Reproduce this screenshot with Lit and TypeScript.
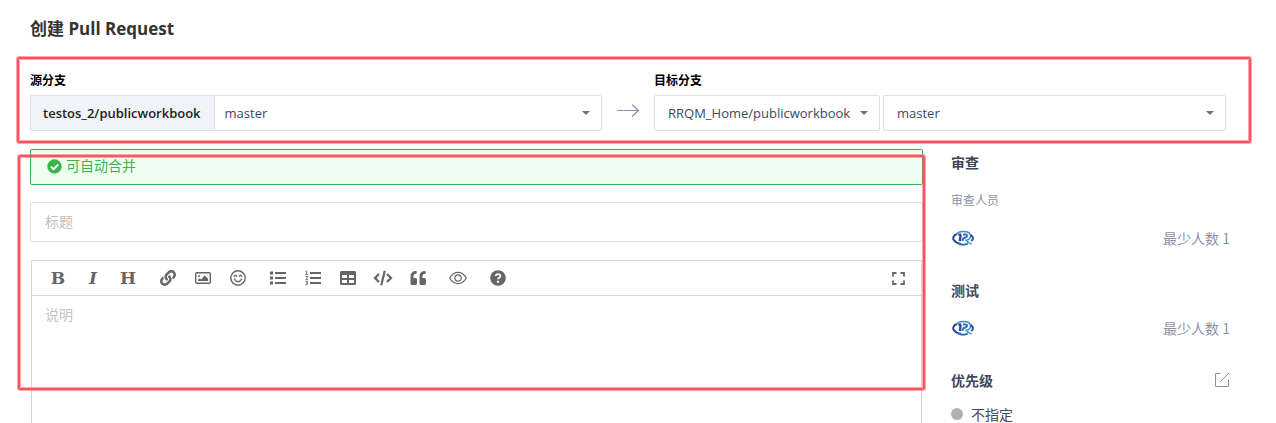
import { LitElement, html, css, svg, TemplateResult } from "lit";
import { customElement, property } from "lit/decorators.js";

type Tool = { label: string; icon: TemplateResult };

const icon = (body: TemplateResult, w = 16, h = 16, box = `0 0 ${w} ${h}`) =>
  html`<svg width=${w} height=${h} viewBox=${box} fill="currentColor" aria-hidden="true">${body}</svg>`;

const caret = html`<svg class="caret" width="8" height="4" viewBox="0 0 8 4" aria-hidden="true">
  <path d="M0 0h8L4 4z" fill="currentColor" />
</svg>`;

const link = icon(
  svg`<path d="M326.612 185.391c59.747 59.809 58.927 155.698.36 214.59-.11.12-.24.25-.36.37l-67.2 67.2c-59.27 59.27-155.699 59.262-214.96 0-59.27-59.26-59.27-155.7 0-214.96l37.106-37.106c9.84-9.84 26.786-3.3 27.294 10.606.648 17.722 3.826 35.527 9.69 52.721 1.986 5.822.567 12.262-3.783 16.612l-13.087 13.087c-28.026 28.026-28.905 73.66-1.155 101.96 28.024 28.579 74.086 28.749 102.325.51l67.2-67.19c28.191-28.191 28.073-73.757 0-101.83-3.701-3.694-7.429-6.564-10.341-8.569a16.037 16.037 0 0 1-6.947-12.606c-.396-10.567 3.348-21.456 11.698-29.806l21.054-21.055c5.521-5.521 14.182-6.199 20.584-1.731a152.482 152.482 0 0 1 20.522 17.197zM467.547 44.449c-59.261-59.262-155.69-59.27-214.96 0l-67.2 67.2c-.12.12-.25.25-.36.37-58.566 58.892-59.387 154.781.36 214.59a152.454 152.454 0 0 0 20.521 17.196c6.402 4.468 15.064 3.789 20.584-1.731l21.054-21.055c8.35-8.35 12.094-19.239 11.698-29.806a16.037 16.037 0 0 0-6.947-12.606c-2.912-2.005-6.64-4.875-10.341-8.569-28.073-28.073-28.191-73.639 0-101.83l67.2-67.19c28.239-28.239 74.3-28.069 102.325.51 27.75 28.3 26.872 73.934-1.155 101.96l-13.087 13.087c-4.35 4.35-5.769 10.79-3.783 16.612 5.864 17.194 9.042 34.999 9.69 52.721.509 13.906 17.454 20.446 27.294 10.606l37.106-37.106c59.271-59.259 59.271-155.699.001-214.959z"/>`,
  16, 16, "0 0 512 512",
);

const image = icon(svg`
  <rect x=".7" y="2.700" width="14.600" height="10.600" rx="1" fill="none" stroke="currentColor" stroke-width="1.400"/>
  <circle cx="4" cy="6" r="1"/>
  <path d="M3 11V9.600l1.600-1.200 1.600 1.200L9.600 5.600l3.400 3V11z"/>`);

const smile = icon(svg`
  <circle cx="8" cy="8" r="7.200" fill="none" stroke="currentColor" stroke-width="1.400"/>
  <path d="M3.900 6.500q1.500-2 3 0M9.100 6.500q1.500-2 3 0" fill="none" stroke="currentColor" stroke-width="1.300"/>
  <path d="M4.300 9.200Q8 14.200 11.700 9.200" fill="none" stroke="currentColor" stroke-width="1.400" stroke-linecap="round"/>`);

const bullets = icon(svg`
  <path d="M0 1.500h3v3H0zM0 6.500h3v3H0zM0 11.500h3v3H0zM5 2h11v2H5zM5 7h11v2H5zM5 12h11v2H5z"/>`);

const numbers = icon(svg`
  <path d="M5 2h11v2H5zM5 7h11v2H5zM5 12h11v2H5z"/>
  <path d="M.4 1.200h1.300v3M.2 4.300h3M.4 6.400h2v1.500L.8 9.400h2.200M.4 11.300h2v3.200h-2M.9 12.900h1.500" fill="none" stroke="currentColor" stroke-width=".9"/>`);

const table = icon(svg`
  <path fill-rule="evenodd" d="M1.500 1h13A1.500 1.500 0 0 1 16 2.500v11a1.500 1.500 0 0 1-1.500 1.500h-13A1.500 1.500 0 0 1 0 13.500v-11A1.500 1.500 0 0 1 1.500 1zM2 5v3h5V5zM9 5v3h5V5zM2 10v3h5v-3zM9 10v3h5v-3z"/>`);

const code = icon(svg`
  <path d="M6 4 2 8l4 4M14 4l4 4-4 4" fill="none" stroke="currentColor" stroke-width="2.300"/>
  <path d="M11.800.8 8.200 15.200" fill="none" stroke="currentColor" stroke-width="2.200"/>`, 20, 16);

const quote = icon(svg`
  <path d="M5.500 8H3.500V6a2 2 0 0 1 2-2h.5a.7.7 0 0 0 .7-.7V1.700A.7.700 0 0 0 6 1h-.5a5 5 0 0 0-5 5v7.500A1.500 1.500 0 0 0 2 15h3.500A1.500 1.500 0 0 0 7 13.500v-4A1.500 1.500 0 0 0 5.500 8zM14.500 8h-2V6a2 2 0 0 1 2-2h.5a.7.7 0 0 0 .7-.7V1.700A.7.700 0 0 0 15 1h-.5a5 5 0 0 0-5 5v7.500A1.500 1.500 0 0 0 11 15h3.500a1.500 1.500 0 0 0 1.500-1.500v-4A1.500 1.500 0 0 0 14.500 8z"/>`);

const eye = icon(svg`
  <path d="M.6 8Q4 2.400 9 2.400T17.400 8Q14 13.600 9 13.600T.6 8z" fill="none" stroke="currentColor" stroke-width="1.200"/>
  <circle cx="9" cy="8" r="3.200" fill="none" stroke="currentColor" stroke-width="1.200"/>`, 18, 16);

const help = icon(svg`
  <circle cx="8" cy="8" r="7.800"/>
  <path d="M5.600 6.200Q6 4.100 8.100 4.100q2.300 0 2.300 1.900 0 1.100-1.200 1.700Q8 8.300 8 9.300" fill="none" stroke="#fff" stroke-width="1.700"/>
  <circle cx="8" cy="11.700" r="1.200" fill="#fff"/>`);

const fullscreen = icon(svg`
  <path d="M1 4.500V1h3.500M8.500 1H12v3.500M12 8.500V12H8.500M4.500 12H1V8.500" fill="none" stroke="currentColor" stroke-width="1.800"/>`, 13, 13);

const groups: Tool[][] = [
  [
    { label: "粗体", icon: html`<span class="glyph">B</span>` },
    { label: "斜体", icon: html`<span class="glyph slanted">I</span>` },
    { label: "标题", icon: html`<span class="glyph">H</span>` },
  ],
  [
    { label: "链接", icon: link },
    { label: "图片", icon: image },
    { label: "表情", icon: smile },
  ],
  [
    { label: "无序列表", icon: bullets },
    { label: "有序列表", icon: numbers },
    { label: "表格", icon: table },
    { label: "代码", icon: code },
    { label: "引用", icon: quote },
  ],
  [{ label: "预览", icon: eye }],
  [{ label: "帮助", icon: help }],
];

const base = css`
  * {
    box-sizing: border-box;
  }
  svg {
    display: block;
  }
  button {
    display: grid;
    place-items: center;
    padding: 0;
    border: 0;
    background: none;
    color: inherit;
    font: inherit;
  }
`;

@customElement("markdown-editor")
class MarkdownEditor extends LitElement {
  static styles = [
    base,
    css`
      :host {
        display: flex;
        flex-direction: column;
        min-height: 300px;
        border: 1px solid #d9d9d9;
        color: #666;
      }
      .toolbar {
        display: flex;
        align-items: center;
        gap: 10px;
        padding: 2px 8px 2px 11px;
        border-bottom: 1px solid #d9d9d9;
      }
      .group {
        display: flex;
        gap: 5px;
      }
      .toolbar button {
        width: 30px;
        height: 30px;
      }
      .end {
        margin-left: auto;
      }
      .glyph {
        font: bold 17px/30px "DejaVu Serif", serif;
      }
      .slanted {
        font-style: italic;
      }
      textarea {
        flex: 1;
        width: 100%;
        padding: 8px 13px;
        border: 0;
        outline: 0;
        resize: none;
        background: none;
        color: #40485b;
        font: inherit;
        line-height: 20px;
      }
      textarea::placeholder {
        color: #c4c4c4;
      }
    `,
  ];

  render() {
    return html`
      <div class="toolbar" role="toolbar" aria-label="编辑器">
        ${groups.map(
          (g) => html`<div class="group">
            ${g.map((t) => html`<button type="button" aria-label=${t.label}>${t.icon}</button>`)}
          </div>`,
        )}
        <button class="end" type="button" aria-label="全屏">${fullscreen}</button>
      </div>
      <textarea aria-label="说明" placeholder="说明"></textarea>
    `;
  }
}

@customElement("member-row")
class MemberRow extends LitElement {
  @property({ type: Number }) minimum = 1;

  static styles = [
    base,
    css`
      :host {
        display: flex;
        align-items: center;
        justify-content: space-between;
        line-height: 20px;
        color: #8c92a4;
      }
    `,
  ];

  render() {
    return html`
      <svg width="24" height="20" viewBox="0 0 24 20" fill="none" role="img" aria-label="RRQM">
        <path d="M5.800 6C2.300 7.500 1.300 10 3 12.300c1.400 2 4 3.200 7 3.600" stroke="#2b3f9b" stroke-width="2" />
        <path d="M5.500 6.300C6.800 4.300 9.400 3.500 12.500 3.500c4.300 0 7 1.900 7 4.700 0 1.900-1.300 3.200-3.300 3.900" stroke="#3e8ccb" stroke-width="1.400" />
        <path d="M19.500 6.800c3 1.800 3.300 4.300.8 6.200" stroke="#2b4fa8" stroke-width="2" />
        <path d="M7.300 6.600h2.900M9.700 6.600 8.800 13" stroke="#2b3f9b" stroke-width="2.200" />
        <path d="M12 6.400h2.300c2.300 0 2.200 2.700 0 3.100-1.700.3-2.600 1.100-2.900 3.300" stroke="#2f70bd" stroke-width="2" />
        <path d="M14.500 11.500c1.500 2.300 3.500 3.800 6.300 4.500" stroke="#3fa2da" stroke-width="1.700" />
        <path d="M6.500 14.900c2.800 1.900 7 2.200 10.300.8" stroke="#2f70bd" stroke-width="1.800" />
      </svg>
      <span>最少人数 ${this.minimum}</span>
    `;
  }
}

@customElement("app-root")
class AppRoot extends LitElement {
  static styles = [
    base,
    css`
      :host {
        display: block;
        box-sizing: border-box;
        height: 100vh;
        overflow: hidden;
        padding: 17px 46px 0 30px;
        background: #fff;
        color: #40485b;
        font: 14px/20px "Noto Sans CJK SC", sans-serif;
      }
      h1 {
        margin: 0 0 31px;
        color: #333;
        font: bold 17px/24px "Open Sans", "Noto Sans CJK SC", sans-serif;
      }
      h2 {
        margin: 0;
        font-size: 14px;
        line-height: 20px;
        font-weight: bold;
      }
      .marked {
        position: relative;
      }
      .mark {
        position: absolute;
        border: 2px solid #ff5261;
        border-radius: 2px;
        box-shadow: 0 0 0 1px #ff526180, inset 0 0 0 1px #ff526180;
        pointer-events: none;
      }
      .mark-branches {
        inset: -15px -25px -12px -13px;
      }
      .mark-form {
        top: 6px;
        right: -2px;
        left: -12px;
        height: 235px;
      }
      .branches {
        display: grid;
        grid-template-columns: 1fr 52px 1fr;
        margin: 0 4px 18px 0;
      }
      .side > label {
        display: block;
        margin-bottom: 7px;
        color: #000;
        font-size: 12px;
        line-height: 16px;
        font-weight: bold;
      }
      .fields {
        display: flex;
        height: 36px;
        font: 13px/20px "Open Sans", sans-serif;
      }
      .target {
        gap: 3px;
      }
      .repo {
        padding: 7px 13px 7px 12px;
        border: 1px solid #dce1e8;
        border-right: 0;
        border-radius: 2px 0 0 2px;
        background: #f0f4f8;
        color: #222;
        font-weight: 600;
      }
      .pick {
        display: grid;
        align-items: center;
        color: #6b7080;
      }
      .grow {
        flex: 1;
      }
      .pick > * {
        grid-area: 1 / 1;
      }
      .caret {
        justify-self: end;
        margin-right: 12px;
        pointer-events: none;
      }
      select {
        appearance: none;
        width: 100%;
        height: 36px;
        padding: 0 28px 0 13px;
        border: 1px solid #dce1e8;
        border-radius: 2px;
        background: #fff;
        color: #40485b;
        font: inherit;
      }
      .joined select {
        padding-left: 10px;
        border-radius: 0 2px 2px 0;
      }
      .arrow {
        display: flex;
        align-items: flex-end;
        justify-content: center;
        padding-bottom: 13px;
        color: #8c92a4;
      }
      .columns {
        display: grid;
        grid-template-columns: minmax(0, 1fr) 279px;
        gap: 28px;
      }
      .form {
        display: flex;
        flex-direction: column;
        gap: 17px;
      }
      .notice {
        display: flex;
        align-items: flex-start;
        gap: 4px;
        height: 36px;
        padding: 5px 16px;
        border: 1px solid #36b24a;
        border-radius: 2px;
        background: #eefff1;
        color: #3bb54a;
      }
      .notice svg {
        margin-top: 4px;
      }
      .title {
        width: 100%;
        height: 40px;
        padding: 0 14px 2px;
        border: 1px solid #dfe1e6;
        border-radius: 2px;
        outline: 0;
        color: #40485b;
        font: inherit;
      }
      .title::placeholder {
        color: #c0c0c0;
      }
      markdown-editor {
        margin: 1px 1px 0;
      }
      aside {
        display: flex;
        flex-direction: column;
        gap: 32px;
        padding-top: 3px;
      }
      section {
        display: flex;
        flex-direction: column;
        gap: 18px;
      }
      .sub {
        color: #8c92a4;
        font-size: 12px;
      }
      .priority {
        gap: 14px;
      }
      .heading {
        display: flex;
        align-items: center;
        justify-content: space-between;
        color: #8c92a4;
      }
      .heading h2 {
        color: #40485b;
      }
      .level {
        display: flex;
        align-items: center;
        gap: 8px;
      }
      .dot {
        width: 12px;
        height: 12px;
        border-radius: 50%;
        background: #b0b0b0;
      }
    `,
  ];

  render() {
    return html`
      <h1>创建 Pull Request</h1>
      <div class="branches marked">
        <div class="side">
          <label for="source">源分支</label>
          <div class="fields">
            <span class="repo">testos_2/publicworkbook</span>
            <div class="pick joined grow">
              <select id="source"><option>master</option></select>${caret}
            </div>
          </div>
        </div>
        <div class="arrow">
          <svg width="24" height="14" viewBox="0 0 24 14" fill="none" stroke="currentColor" aria-hidden="true">
            <path d="M1 6.500h22M16 .8 22.500 6.500 16 12.500" stroke-width="1.200" />
          </svg>
        </div>
        <div class="side">
          <label for="target">目标分支</label>
          <div class="fields target">
            <div class="pick">
              <select aria-label="目标仓库"><option>RRQM_Home/publicworkbook</option></select>${caret}
            </div>
            <div class="pick grow">
              <select id="target"><option>master</option></select>${caret}
            </div>
          </div>
        </div>
        <div class="mark mark-branches"></div>
      </div>
      <div class="columns">
        <main class="form marked">
          <div class="notice" role="status">
            <svg width="15" height="15" viewBox="0 0 15 15" aria-hidden="true">
              <circle cx="7.500" cy="7.500" r="7.200" fill="currentColor" />
              <path d="m3.900 7.700 2.600 2.500 4.700-4.700" fill="none" stroke="#fff" stroke-width="1.800" />
            </svg>
            <span>可自动合并</span>
          </div>
          <input class="title" type="text" aria-label="标题" placeholder="标题" />
          <markdown-editor></markdown-editor>
          <div class="mark mark-form"></div>
        </main>
        <aside>
          <section>
            <h2>审查</h2>
            <div class="sub">审查人员</div>
            <member-row></member-row>
          </section>
          <section>
            <h2>测试</h2>
            <member-row></member-row>
          </section>
          <section class="priority">
            <div class="heading">
              <h2>优先级</h2>
              <button type="button" aria-label="编辑优先级">
                <svg width="16" height="16" viewBox="0 0 16 16" fill="none" stroke="currentColor" aria-hidden="true">
                  <path d="M6.500 1.500h-5v13h13v-7M6.500 9.500l8.500-8.500" />
                </svg>
              </button>
            </div>
            <div class="level"><span class="dot"></span>不指定</div>
          </section>
        </aside>
      </div>
    `;
  }
}
